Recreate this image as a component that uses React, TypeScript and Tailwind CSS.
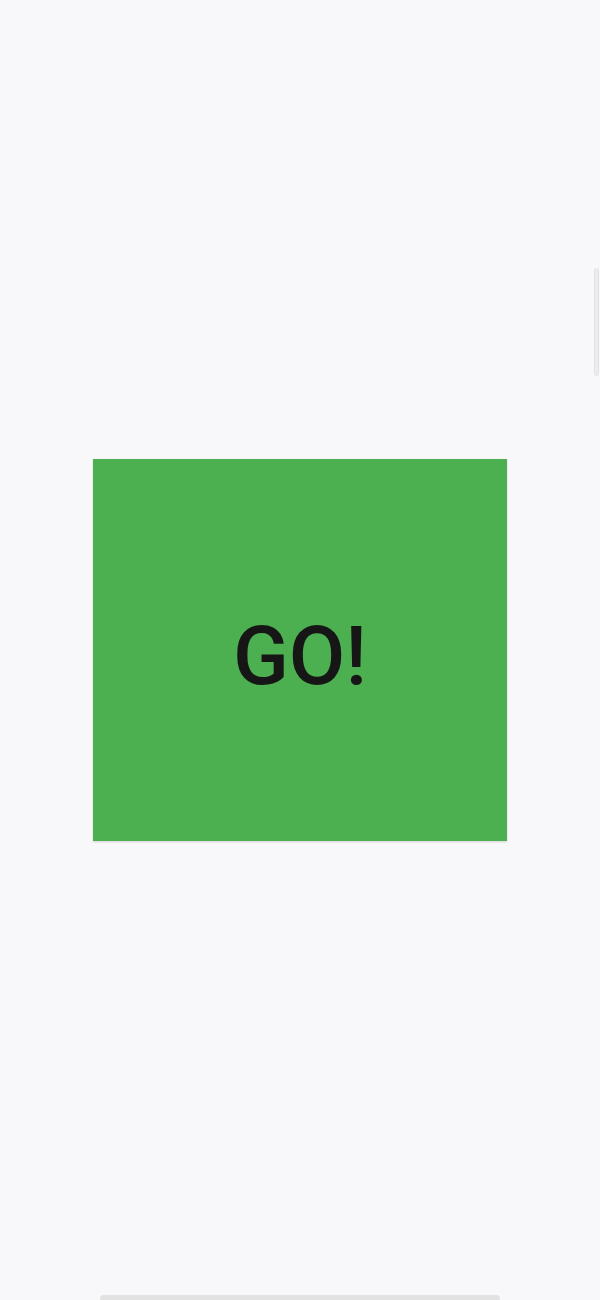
import React from "react";

export default function App() {
  return (
    <div className="relative w-[600px] h-[1300px] bg-[#f8f7fa] overflow-hidden" style={{ fontFamily: "Roboto, 'Noto Sans', sans-serif" }}>
      <div className="flex flex-col items-center pt-[459px]">
        <div className="w-[414px] h-[382px] bg-[#4caf50] shadow-[0_1px_2px_rgba(0,0,0,0.15)] flex items-center justify-center">
          <span className="text-[82px] font-medium text-[#161616] leading-none mt-[12px]">GO!</span>
        </div>
      </div>
      <div className="absolute right-[1px] top-[268px] w-[5px] h-[108px] rounded-full bg-[#ececee] border border-[#e2e2e4]" />
      <div className="absolute left-[100px] bottom-0 w-[400px] h-[5px] rounded-t-sm bg-[#e2e2e2]" />
    </div>
  );
}
